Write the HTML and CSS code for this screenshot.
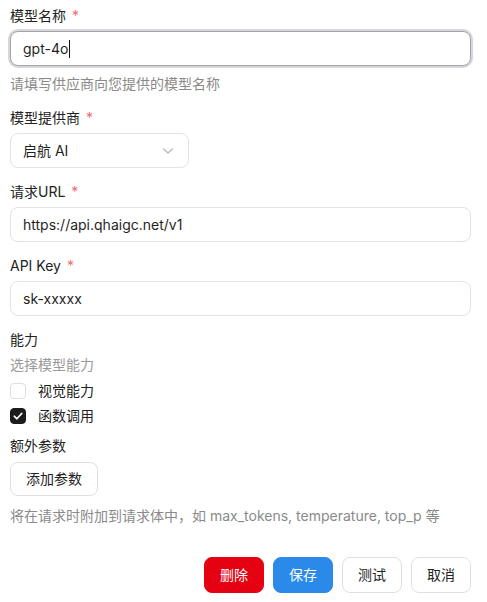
FILE: index.html
```html
<!DOCTYPE html>
<html lang="zh-CN">
<head>
<meta charset="utf-8">
<title>模型配置</title>
<link rel="stylesheet" href="styles.css">
</head>
<body>
<form class="form">
  <div class="field first">
    <div class="label">模型名称<span class="req">*</span></div>
    <div class="input focused"><span class="value">gpt-4o</span><span class="caret"></span></div>
    <div class="help">请填写供应商向您提供的模型名称</div>
  </div>
  <div class="field">
    <div class="label">模型提供商<span class="req">*</span></div>
    <div class="select"><span class="value">启航 AI</span>
      <svg class="chev" width="12" height="8" viewBox="0 0 12 8"><path d="M1.5 2 L6 6 L10.5 2" fill="none" stroke="#b4b4b4" stroke-width="1.2" stroke-linecap="round" stroke-linejoin="round"/></svg>
    </div>
  </div>
  <div class="field">
    <div class="label">请求URL<span class="req">*</span></div>
    <div class="input"><span class="value">https://api.qhaigc.net/v1</span></div>
  </div>
  <div class="field">
    <div class="label">API Key<span class="req">*</span></div>
    <div class="input"><span class="value">sk-xxxxx</span></div>
  </div>
  <div class="field">
    <div class="label">能力</div>
    <div class="sub">选择模型能力</div>
    <div class="checks">
      <div class="check"><span class="box"></span><span>视觉能力</span></div>
      <div class="check"><span class="box on"><svg width="16" height="16" viewBox="0 0 16 16"><path d="M4.2 8.2 L6.9 10.8 L11.8 5.4" fill="none" stroke="#fff" stroke-width="1.6" stroke-linecap="round" stroke-linejoin="round"/></svg></span><span>函数调用</span></div>
    </div>
  </div>
  <div class="field extra">
    <div class="label">额外参数</div>
    <button type="button" class="btn">添加参数</button>
    <div class="help help2">将在请求时附加到请求体中，如 max_tokens, temperature, top_p 等</div>
  </div>
  <div class="actions">
    <button type="button" class="btn danger">删除</button>
    <button type="button" class="btn primary">保存</button>
    <button type="button" class="btn">测试</button>
    <button type="button" class="btn">取消</button>
  </div>
</form>
</body>
</html>
```
FILE: styles.css
```css
* { box-sizing: border-box; }
html, body { margin: 0; padding: 0; background: #fff; }
body {
  font-family: Inter, "Noto Sans CJK SC", sans-serif;
  font-size: 14px;
  color: #222;
  line-height: 20px;
}
.form {
  width: 471px;
  padding: 6px 0 0 10px;
  display: flex;
  flex-direction: column;
}
.field { display: flex; flex-direction: column; margin-bottom: 14px; }
.label { height: 20px; margin-bottom: 5px; color: #222; overflow: hidden; }
.req { color: #f36b6b; margin-left: 6px; }
.input, .select {
  height: 35px;
  flex: none;
  border: 1px solid #e3e3e6;
  border-radius: 8px;
  padding: 0 12px;
  display: flex;
  align-items: center;
  color: #1f1f1f;
  background: #fff;
}
.input.focused {
  border-color: #a4a4ac;
  box-shadow: 0 0 0 2px #d6d6dc;
}
.caret { width: 1px; height: 18px; background: #111; margin-left: 1px; }
.select { width: 179px; justify-content: space-between; padding-right: 14px; }
.help { color: #8a8a8a; margin-top: 8px; height: 20px; overflow: hidden; white-space: nowrap; }
.sub { color: #9a9a9a; height: 20px; margin-bottom: 4px; overflow: hidden; }
.checks { display: flex; flex-direction: column; gap: 1px; }
.check { display: flex; align-items: center; height: 24px; gap: 12px; overflow: hidden; }
.box {
  width: 16px; height: 16px;
  flex: none;
  border: 1px solid #dedede;
  border-radius: 4px;
  display: flex;
}
.box.on { background: #1c1c1c; border-color: #1c1c1c; }
.box.on svg { margin: -1px; }
.field.extra { margin-top: -6px; }
.field.extra .label { margin-bottom: 6px; }
.btn {
  font: inherit;
  line-height: 20px;
  height: 34px;
  padding: 0 15px;
  border: 1px solid #e0e0e0;
  border-radius: 8px;
  background: #fff;
  color: #222;
  align-self: flex-start;
  cursor: pointer;
}
.help2 { margin-top: 10px; }
.actions {
  display: flex;
  justify-content: flex-end;
  gap: 9px;
  margin-top: 17px;
}
.actions .btn { height: 36px; }
.btn.danger { background: #e50012; border-color: #e50012; color: #fff; }
.btn.primary { background: #2a89e9; border-color: #2a89e9; color: #fff; }
```
